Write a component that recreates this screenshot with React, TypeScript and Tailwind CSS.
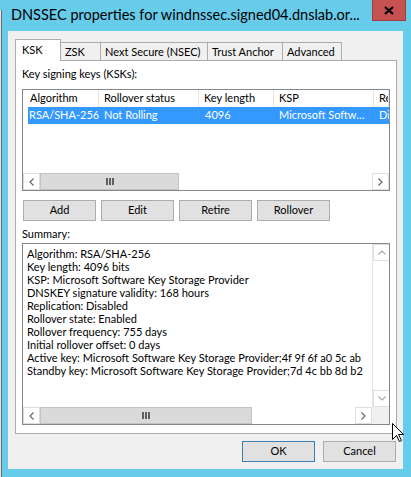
import React from "react";

const listCols = [
  { title: "Algorithm", value: "RSA/SHA-256", w: 76, hp: 7, rp: 1 },
  { title: "Rollover status", value: "Not Rolling", w: 100, hp: 5, rp: 5 },
  { title: "Key length", value: "4096", w: 75, hp: 5, rp: 6 },
  { title: "KSP", value: "Microsoft Softw…", w: 100, hp: 5, rp: 5 },
  { title: "Replication", value: "Disabled", w: 0, hp: 5, rp: 5 },
];

const summary = [
  "Algorithm: RSA/SHA-256",
  "Key length: 4096 bits",
  "KSP: Microsoft Software Key Storage Provider",
  "DNSKEY signature validity: 168 hours",
  "Replication: Disabled",
  "Rollover state: Enabled",
  "Rollover frequency: 755 days",
  "Initial rollover offset: 0 days",
  "Active key: Microsoft Software Key Storage Provider;4f 9f 6f a0 5c ab",
  "Standby key: Microsoft Software Key Storage Provider;7d 4c bb 8d b2",
];

const tabs = [
  { label: "KSK", w: 46, active: true },
  { label: "ZSK", w: 41 },
  { label: "Next Secure (NSEC)", w: 108 },
  { label: "Trust Anchor", w: 76 },
  { label: "Advanced", w: 60 },
];

type Dir = "left" | "right" | "up" | "down";

const Chevron = ({ dir, color = "#606060" }: { dir: Dir; color?: string }) => {
  const d = {
    left: "M4.5 0.5 L1 4 L4.5 7.5",
    right: "M0.5 0.5 L4 4 L0.5 7.5",
    up: "M0.5 4.5 L4 1 L7.5 4.5",
    down: "M0.5 0.5 L4 4 L7.5 0.5",
  }[dir];
  const horiz = dir === "left" || dir === "right";
  return (
    <svg width={horiz ? 5 : 8} height={horiz ? 8 : 5} viewBox={horiz ? "0 0 5 8" : "0 0 8 5"}>
      <path d={d} fill="none" stroke={color} strokeWidth="1.1" />
    </svg>
  );
};

const Gripper = () => (
  <svg width="8" height="7" viewBox="0 0 8 7">
    <rect x="0" y="0" width="2" height="7" fill="#606060" />
    <rect x="3" y="0" width="2" height="7" fill="#606060" />
    <rect x="6" y="0" width="2" height="7" fill="#606060" />
  </svg>
);

const ScrollBtn = ({ dir, dim }: { dir: Dir; dim?: boolean }) => (
  <div className="w-[17px] h-[17px] shrink-0 flex items-center justify-center bg-white border border-[#dedede]">
    <Chevron dir={dir} color={dim ? "#a8a8a8" : "#606060"} />
  </div>
);

const HScroll = ({ thumb, corner }: { thumb: number; corner?: boolean }) => (
  <div className="flex h-[17px] shrink-0 bg-white">
    <ScrollBtn dir="left" />
    <div
      className="h-full shrink-0 bg-[#dadada] border border-[#c2c2c2] flex items-center justify-center"
      style={{ width: thumb }}
    >
      <Gripper />
    </div>
    <div className="flex-1 min-w-0" />
    <ScrollBtn dir="right" />
    {corner && <div className="w-[17px] bg-[#f0f0f0] h-full shrink-0" />}
  </div>
);

const Button = ({ label, primary, w = 73 }: { label: string; primary?: boolean; w?: number }) => (
  <div
    className={`h-[21px] shrink-0 flex items-center justify-center bg-[#e1e1e1] border ${
      primary ? "border-[#3c7fb1]" : "border-[#adadad]"
    }`}
    style={{ width: w }}
  >
    {label}
  </div>
);

const KeyList = () => (
  <div className="h-[102px] border border-[#828790] bg-white flex flex-col overflow-hidden">
    <div className="flex h-[17px] shrink-0 overflow-hidden">
      {listCols.map((c) => (
        <div
          key={c.title}
          className={`h-full flex items-center whitespace-nowrap overflow-hidden border-r border-[#e5e5e5] ${
            c.w ? "shrink-0" : "flex-1 min-w-0"
          }`}
          style={{ width: c.w || undefined, paddingLeft: c.hp }}
        >
          {c.title}
        </div>
      ))}
    </div>
    <div className="flex h-[17px] shrink-0 ml-[5px] bg-[#3399ff] text-white overflow-hidden">
      {listCols.map((c, i) => (
        <div
          key={c.title}
          className={`h-full flex items-center whitespace-nowrap overflow-hidden ${
            c.w ? "shrink-0" : "flex-1 min-w-0"
          }`}
          style={{ width: c.w ? c.w - (i === 0 ? 5 : 0) : undefined, paddingLeft: c.rp }}
        >
          {c.value}
        </div>
      ))}
    </div>
    <div className="flex-1" />
    <HScroll thumb={139} />
  </div>
);

const SummaryBox = () => (
  <div className="h-[182px] border border-[#828790] bg-white flex flex-col overflow-hidden">
    <div className="flex flex-1 min-h-0">
      <div className="flex-1 min-w-0 pl-[4px] pt-[3px] leading-[13px] whitespace-nowrap overflow-hidden">
        {summary.map((l) => (
          <div key={l}>{l}</div>
        ))}
      </div>
      <div className="w-[17px] shrink-0 flex flex-col border-l border-[#e6e6e6]">
        <ScrollBtn dir="up" dim />
        <div className="flex-1" />
        <ScrollBtn dir="down" dim />
      </div>
    </div>
    <HScroll thumb={212} corner />
  </div>
);

const Cursor = () => (
  <svg className="absolute left-[391px] top-[422px]" width="14" height="21" viewBox="0 0 14 21">
    <path
      d="M1.5 1.5 L1.5 17.5 L5.5 13.5 L8.5 19.5 L10.5 18.5 L7.5 12.5 L12.5 12.5 Z"
      fill="#fff"
      stroke="#000"
      strokeWidth="1"
    />
  </svg>
);

export default function App() {
  return (
    <div className="relative w-[411px] h-[477px] overflow-hidden bg-[#67cbea] flex text-black text-[11px] font-[family-name:Lato,sans-serif]">
      <div className="w-[2px] shrink-0 flex flex-col">
        <div className="h-[10px]" />
        <div className="flex-1 flex">
          <div className="w-px bg-[#e6e6e6]" />
          <div className="w-px bg-[#6e6e6e]" />
        </div>
      </div>

      <div className="flex-1 min-w-0 flex flex-col pl-[6px] pr-[8px]">
        <div className="h-[31px] shrink-0 flex items-start">
          <div className="ml-[3px] mt-[6px] text-[14.5px] leading-[18px] whitespace-nowrap">
            DNSSEC properties for windnssec.signed04.dnslab.or...
          </div>
          <div className="ml-auto -mr-[3px] w-[34px] h-[21px] shrink-0 bg-[#c75050] border border-[#a13d3d] border-t-0 flex items-center justify-center">
            <svg width="10" height="9" viewBox="0 0 10 9">
              <path d="M1 1 L9 8 M9 1 L1 8" stroke="#000" strokeWidth="2.2" />
            </svg>
          </div>
        </div>

        <div className="h-[438px] shrink-0 bg-[#f0f0f0] flex flex-col pl-[7px] pr-[6px] pt-[8px]">
          <div className="flex items-end h-[21px] shrink-0">
            {tabs.map((t, i) =>
              t.active ? (
                <div
                  key={t.label}
                  className="relative z-10 h-[22px] shrink-0 -mb-px bg-white border border-b-0 border-[#acacac] pl-[6px] pt-[3px] leading-[14px]"
                  style={{ width: t.w }}
                >
                  {t.label}
                </div>
              ) : (
                <div
                  key={t.label}
                  className={`h-[18px] shrink-0 bg-[#f0f0f0] border border-b-0 border-[#acacac] pl-[4px] pt-[2px] leading-[14px] whitespace-nowrap ${
                    i > 0 ? "-ml-px" : ""
                  }`}
                  style={{ width: t.w }}
                >
                  {t.label}
                </div>
              )
            )}
          </div>

          <div className="h-[374px] shrink-0 bg-white border border-[#acacac] flex flex-col px-[6px] pt-[5px]">
            <div className="h-[15px] leading-[15px] mb-[8px]">Key signing keys (KSKs):</div>
            <KeyList />
            <div className="flex gap-[5px] mt-[9px] pl-[1px]">
              <Button label="Add" />
              <Button label="Edit" />
              <Button label="Retire" />
              <Button label="Rollover" />
            </div>
            <div className="h-[15px] leading-[15px] mt-[5px] mb-[2px]">Summary:</div>
            <SummaryBox />
          </div>

          <div className="flex justify-end gap-[8px] mt-[7px] pr-[1px]">
            <Button label="OK" primary />
            <Button label="Cancel" />
          </div>
        </div>
      </div>

      <Cursor />
    </div>
  );
}
